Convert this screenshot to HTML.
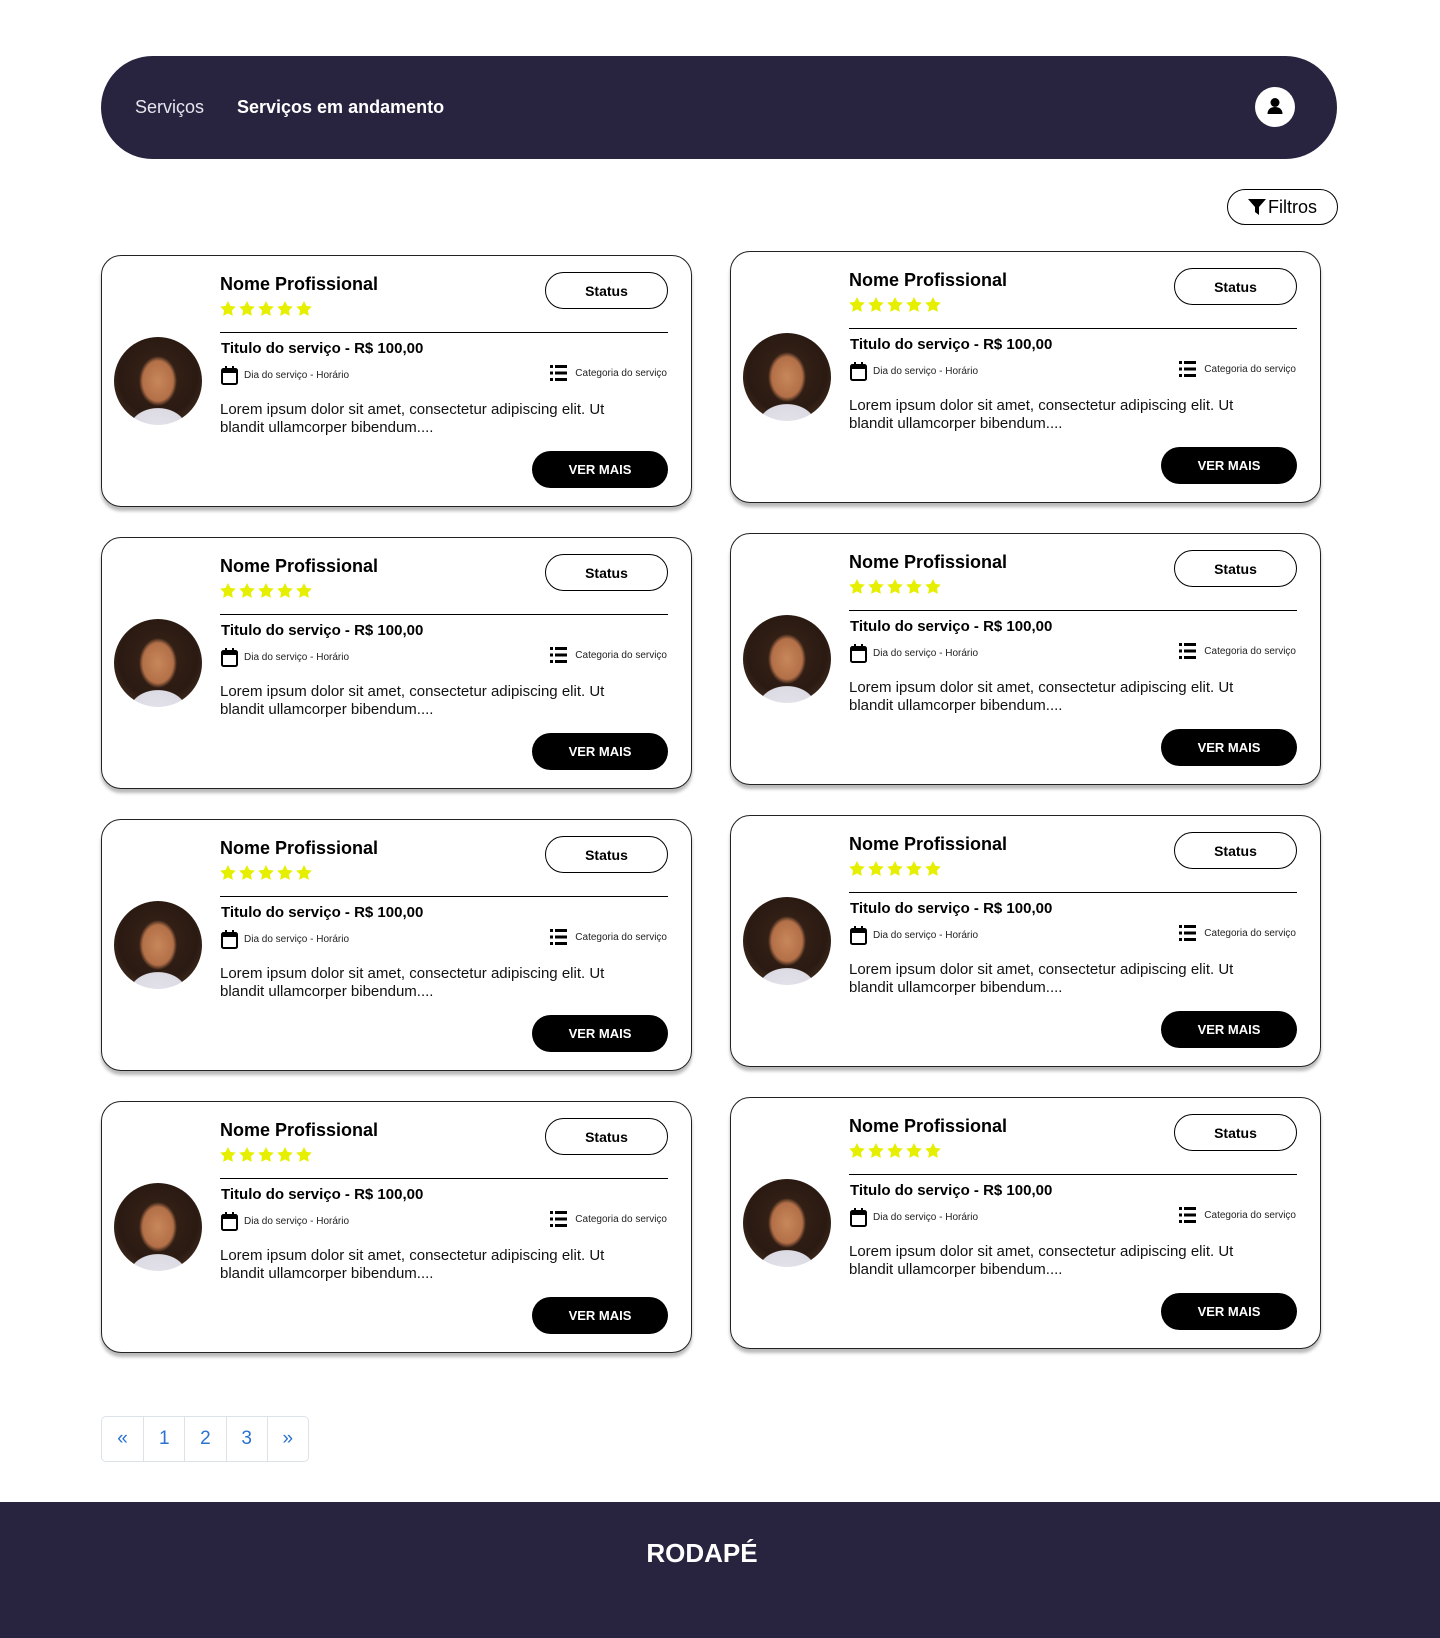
<!DOCTYPE html>
<html><head><meta charset="utf-8"><style>
*{box-sizing:border-box;margin:0;padding:0}
body{width:1440px;height:1638px;background:#fff;font-family:"Liberation Sans",sans-serif;position:relative;overflow:hidden;color:#000}
.nav{position:absolute;left:101px;top:56px;width:1236px;height:103px;background:#28243f;border-radius:52px}
.nav .a{position:absolute;left:34px;top:41px;color:#e6e6ee;font-size:18px}
.nav .b{position:absolute;left:136px;top:41px;color:#fff;font-size:18px;font-weight:bold}
.nav .u{position:absolute;left:1154px;top:31px;width:40px;height:40px;border-radius:50%;background:#fff}
.filt{position:absolute;left:1227px;top:189px;width:111px;height:36px;border:1px solid #000;border-radius:18px;font-size:18px;display:flex;align-items:center;justify-content:center;gap:2px}
.card{position:absolute;width:591px;height:252px;border:1px solid #222;border-radius:20px;background:#fff;box-shadow:0 4px 3px rgba(0,0,0,.28)}
.av{position:absolute;left:12px;top:81px;width:88px;height:88px;border-radius:50%;background:radial-gradient(ellipse 19px 25px at 50% 50%,#c8865a 0,#b37048 80%,transparent 100%),radial-gradient(ellipse 40px 30px at 50% 105%,#e4e2ea 0,#dcdae2 70%,transparent 72%),radial-gradient(circle at 50% 45%,#3a2418 0,#2a1a12 60%,#5a3f2c 100%);overflow:hidden}
.nm{position:absolute;left:118px;top:18px;font-size:18px;font-weight:bold}
.st{position:absolute;left:118px;top:45px;display:flex;gap:3px}
.sb{position:absolute;left:443px;top:16px;width:123px;height:37px;border:1px solid #000;border-radius:19px;font-size:14px;font-weight:bold;display:flex;align-items:center;justify-content:center}
.hr{position:absolute;left:118px;top:76px;width:448px;height:1px;background:#000}
.ti{position:absolute;left:119px;top:84px;font-size:15px;font-weight:bold}
.dia{position:absolute;left:119px;top:110px;display:flex;align-items:center;gap:6px;font-size:10px;color:#222}
.cat{position:absolute;right:24px;top:108px;display:flex;align-items:center;gap:8px;font-size:10px;color:#222}
.lo{position:absolute;left:118px;top:145px;width:415px;font-size:15px;line-height:18px;color:#111}
.vm{position:absolute;left:430px;top:195px;width:136px;height:37px;background:#000;color:#fff;border-radius:19px;font-size:13px;font-weight:bold;display:flex;align-items:center;justify-content:center}
.pg{position:absolute;left:101px;top:1416px;height:46px;display:flex;border:1px solid #dde2e8;border-radius:5px}
.pg div{width:41.2px;height:44px;border-left:1px solid #dde2e8;color:#2a73d0;font-size:19px;display:flex;align-items:center;justify-content:center}
.pg div:first-child{border-left:none}
.ft{position:absolute;left:0;top:1502px;width:1404px;height:136px;background:#28243f;color:#fff;font-size:26px;font-weight:bold;text-align:center;padding-top:36px}
.fb{position:absolute;left:0;top:1502px;width:1440px;height:136px;background:#28243f}
</style></head><body>
<div class="nav"><span class="a">Serviços</span><span class="b">Serviços em andamento</span>
<div class="u"><svg width="40" height="40" viewBox="0 0 40 40"><circle cx="20" cy="15.5" r="4.5" fill="#000"/><path d="M12.5 27c0-5 3.5-7 7.5-7s7.5 2 7.5 7z" fill="#000"/></svg></div></div>
<div class="filt"><svg width="18" height="16" viewBox="0 0 18 16"><path d="M0 0h18l-7 8v8l-4-3V8z" fill="#000"/></svg>Filtros</div>
<div id="cards"></div>
<script>
var star='<svg width="16" height="15" viewBox="0 0 24 23"><path d="M12 0l3.7 7.5 8.3 1.2-6 5.8 1.4 8.3L12 18.9 4.6 22.8 6 14.5 0 8.7l8.3-1.2z" fill="#e6ef00"/></svg>';
var cal='<svg width="17" height="19" viewBox="0 0 17 19"><rect x="1" y="3" width="15" height="15" rx="1.5" fill="none" stroke="#000" stroke-width="2"/><rect x="1" y="3" width="15" height="4" fill="#000"/><rect x="4" y="0" width="2" height="4" fill="#000"/><rect x="11" y="0" width="2" height="4" fill="#000"/></svg>';
var lst='<svg width="17" height="18" viewBox="0 0 17 18"><rect x="0" y="1" width="3" height="3" fill="#000"/><rect x="5" y="1" width="12" height="3" fill="#000"/><rect x="0" y="7.5" width="3" height="3" fill="#000"/><rect x="5" y="7.5" width="12" height="3" fill="#000"/><rect x="0" y="14" width="3" height="3" fill="#000"/><rect x="5" y="14" width="12" height="3" fill="#000"/></svg>';
var h='';
for(var r=0;r<4;r++){for(var c=0;c<2;c++){
var x=c?730:101,y=(c?251:255)+r*282;
h+='<div class="card" style="left:'+x+'px;top:'+y+'px"><div class="av"></div><div class="nm">Nome Profissional</div><div class="st">'+star+star+star+star+star+'</div><div class="sb">Status</div><div class="hr"></div><div class="ti">Titulo do serviço - R$ 100,00</div><div class="dia">'+cal+'Dia do serviço - Horário</div><div class="cat">'+lst+'Categoria do serviço</div><div class="lo">Lorem ipsum dolor sit amet, consectetur adipiscing elit. Ut blandit ullamcorper bibendum....</div><div class="vm">VER MAIS</div></div>';
}}
document.getElementById('cards').innerHTML=h;
</script>
<div class="pg"><div>«</div><div>1</div><div>2</div><div>3</div><div>»</div></div>
<div class="fb"></div>
<div class="ft">RODAPÉ</div>
</body></html>
